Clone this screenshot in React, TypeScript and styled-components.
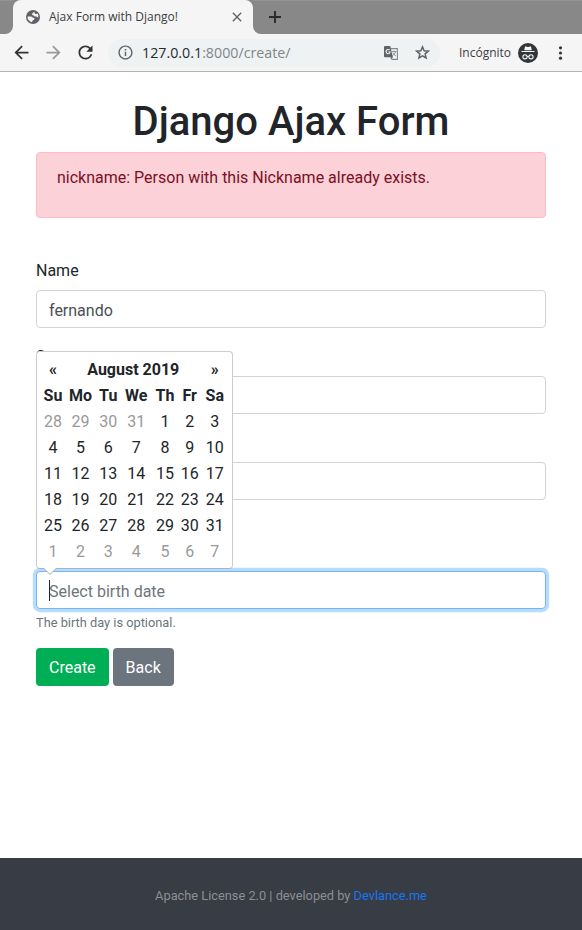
import React from 'react';
import styled, { createGlobalStyle, css } from 'styled-components';
import {
  MdArrowBack,
  MdArrowForward,
  MdClose,
  MdInfoOutline,
  MdRefresh,
} from 'react-icons/md';

const GlobalStyle = createGlobalStyle`
  *, *::before, *::after { box-sizing: border-box; }
  body {
    margin: 0;
    background: #fff;
    color: #212529;
    font: 400 16px/1.5 Roboto, "Liberation Sans", sans-serif;
  }
  svg { flex: none; }
`;

const Window = styled.div`
  display: flex;
  flex-direction: column;
  height: 930px;
  overflow: hidden;
`;

const TabStrip = styled.div`
  display: flex;
  height: 34px;
  background: #888;
  box-shadow: inset 0 1px #939393;
  font: 12px/34px "Open Sans", "Noto Sans", sans-serif;
`;

const TabBacking = styled.div<{ $grow?: boolean }>`
  display: flex;
  flex: ${(p) => (p.$grow ? '1' : 'none')};
  background: #f5f5f5;
`;

const StripEdge = styled.div<{ $side: 'left' | 'right' }>`
  display: flex;
  align-items: center;
  width: ${(p) => (p.$side === 'left' ? '13px' : '100%')};
  padding-left: ${(p) => (p.$side === 'left' ? '0' : '16px')};
  border-radius: ${(p) => (p.$side === 'left' ? '0 0 8px 0' : '0 0 0 8px')};
  background: #888;
  box-shadow: inset 0 1px #939393;
`;

const TabShoulder = styled.div`
  background: linear-gradient(#888 50%, #f5f5f5 50%);
`;

const Tab = styled.div`
  display: flex;
  align-items: center;
  width: 240px;
  padding: 0 8px 0 13px;
  border-radius: 8px 8px 0 0;
  background: #f5f5f5;
  color: #5f6368;
`;

const TabTitle = styled.span`
  flex: 1;
  margin-left: 9px;
  color: #3c4043;
  white-space: nowrap;
`;

const Toolbar = styled.div`
  display: flex;
  align-items: center;
  height: 38px;
  padding-left: 11px;
  background: #f5f5f5;
  border-bottom: 1px solid #b3b3b3;
  font-family: "Open Sans", "Noto Sans", sans-serif;
  color: #333;
`;

const Navigation = styled.div`
  display: flex;
  align-items: center;
  flex: none;
  gap: 11px;
  width: 97px;
  margin-top: -1px;
`;

const Forward = styled(MdArrowForward)`
  color: #999;
`;

const AddressBar = styled.div`
  display: flex;
  align-items: center;
  flex: none;
  width: 332px;
  height: 28px;
  padding: 0 10px 0 9px;
  border-radius: 14px;
  background: #eef2f3;
  color: #5f6368;
`;

const Url = styled.span`
  flex: 1;
  margin-left: 8px;
  font-size: 14.25px;
  line-height: 20px;
  color: #80868b;
`;

const Host = styled.span`
  color: #292a2d;
`;

const AddressActions = styled.span`
  display: flex;
  align-items: center;
  gap: 17px;
`;

const Profile = styled.div`
  display: flex;
  align-items: center;
  flex: none;
  justify-content: space-between;
  width: 79px;
  margin: 0 20px 0 19px;
  font-size: 12px;
  color: #3c4043;
`;

const Main = styled.main`
  flex: 1;
  padding: 24px 36px 0;
`;

const Title = styled.h1`
  margin: 0 0 6px;
  padding-top: 2px;
  font-size: 40px;
  font-weight: 500;
  line-height: 48px;
  text-align: center;
`;

const Alert = styled.div`
  margin-bottom: 40px;
  padding: 13px 20px 27px;
  border: 1px solid #fbbcc7;
  border-radius: 4px;
  background: #fcd1d8;
  color: #7c0f24;
`;

const Group = styled.div`
  margin-bottom: 16px;
`;

const Label = styled.label`
  display: block;
  height: 25px;
  margin-bottom: 7px;
  padding-top: 1px;
`;

const Field = styled.div`
  position: relative;
`;

const Input = styled.input<{ $active?: boolean }>`
  display: block;
  width: 100%;
  height: 38px;
  padding: 7px 12px 5px;
  border: 1px solid #ced4da;
  border-radius: 4px;
  outline: none;
  background: #fff;
  color: #495057;
  font: inherit;
  &::placeholder { color: #6c757d; opacity: 1; }
  ${(p) =>
    p.$active &&
    css`
      border-color: #75b5fb;
      box-shadow: 0 0 0 3.2px #b8dcfd;
    `}
`;

const Caret = styled.span`
  position: absolute;
  left: 13px;
  top: 9px;
  width: 1px;
  height: 21px;
  background: #212529;
`;

const Help = styled.small`
  display: block;
  min-height: 19.2px;
  margin-top: 4px;
  font-size: 12.8px;
  line-height: 19.2px;
  color: #6c757d;
`;

const Button = styled.button<{ $color: string }>`
  height: 38px;
  padding: 2px 13px 0;
  border: 0;
  border-radius: 4px;
  background: ${(p) => p.$color};
  color: #fff;
  font: inherit;
`;

const Actions = styled.div`
  display: flex;
  gap: 4px;
`;

const Picker = styled.div`
  position: absolute;
  z-index: 2;
  left: 0;
  bottom: 40px;
  width: 197px;
  height: 218px;
  padding: 5px 4px 3px;
  border: 1px solid #ccc;
  border-bottom-color: #a8b4c0;
  border-radius: 4px;
  background: #fff;
  &::before, &::after {
    content: "";
    position: absolute;
    left: 6px;
    top: 100%;
    border: 7px solid transparent;
    border-bottom: 0;
    border-top-color: #a7adb3;
  }
  &::after {
    left: 7px;
    border-width: 6px 6px 0;
    border-top-color: #fff;
  }
`;

const Calendar = styled.div`
  display: grid;
  grid-template-columns: 24px 31px 24.5px 31.5px 26px 23.5px 26.5px;
  grid-auto-rows: 26px;
  line-height: 26px;
  text-align: center;
`;

const HeadCell = styled.div<{ $span?: number }>`
  grid-column: span ${(p) => p.$span ?? 1};
  font-weight: 700;
`;

const Day = styled.div<{ $muted: boolean }>`
  color: ${(p) => (p.$muted ? '#999' : '#212529')};
`;

const Footer = styled.footer`
  height: 72px;
  padding-top: 28px;
  background: #383c44;
  color: #8c8f92;
  font-size: 12.8px;
  line-height: 19px;
  text-align: center;
`;

const Link = styled.a`
  color: #1676f3;
`;

const GlobeIcon = () => (
  <svg width="14" height="14" viewBox="0 0 14 14">
    <circle cx="7" cy="7" r="7" fill="#5f6368" />
    <path
      d="M8.3 1.7 6.2 3.4v1.5l1.6.5 1 1.2h1.5l1.9 1.1q.6-2.3-.6-4.1l-1.4.5-1.4-.4z"
      fill="#f5f5f5"
    />
    <path d="M1.6 6.4h3.6l1.9 1.3 1.2.3v1.5l-1.6 1-.8 1.8q-3.6-1.2-4.3-4.3z" fill="#f5f5f5" />
  </svg>
);

const PlusIcon = () => (
  <svg width="12" height="12" viewBox="0 0 12 12">
    <path d="M6 0v12M0 6h12" stroke="#292a2d" strokeWidth="1.9" />
  </svg>
);

const TranslateIcon = () => (
  <svg width="14" height="14" viewBox="0 0 14 14">
    <path d="M7 2.6h6.4v10.8H7.6" fill="#f5f5f5" stroke="#85898d" strokeWidth="1.1" />
    <path d="M8 5.5h4.5M10.2 4.5v1M11.7 5.6Q10.8 8.6 8.6 9.6M8.8 6.5q1 2.6 3.2 3.6" fill="none" stroke="#85898d" strokeWidth=".9" />
    <path d="M1 0h5.3l2.6 11.3H1q-1 0-1-1V1q0-1 1-1z" fill="#5f6368" />
    <path d="M5.7 4.2A2.1 2.1 0 1 0 6.2 6H4.3" fill="none" stroke="#eef2f3" strokeWidth="1.1" />
    <path d="M6.2 11.3h2.7L7.4 13.5z" fill="#5f6368" />
  </svg>
);

const StarIcon = () => (
  <svg width="15" height="15" viewBox="0 0 15 15">
    <path
      d="m7.5 1.9 1.65 3.85 4.15.38-3.15 2.75.94 4.1L7.5 10.8l-3.59 2.18.94-4.1L1.7 6.13l4.15-.38z"
      fill="none"
      stroke="#5f6368"
      strokeWidth="1.5"
    />
  </svg>
);

const IncognitoIcon = () => (
  <svg width="20" height="20" viewBox="0 0 20 20">
    <circle cx="10" cy="10" r="10" fill="#333639" />
    <path d="M6.2 7.2 7 3.8q.2-.6.8-.4l2.2.5 2.2-.5q.6-.2.8.4l.8 3.4zM3.5 8h13v1h-13z" fill="#f5f5f5" />
    <g fill="none" stroke="#f5f5f5" strokeWidth="1.1">
      <circle cx="7" cy="13.8" r="2.1" />
      <circle cx="13" cy="13.8" r="2.1" />
      <path d="M9.1 13.6q.9-.6 1.8 0" />
    </g>
  </svg>
);

const MenuIcon = () => (
  <svg width="5" height="14" viewBox="0 0 5 14" fill="#333639">
    <circle cx="2.5" cy="1.8" r="1.6" />
    <circle cx="2.5" cy="7" r="1.6" />
    <circle cx="2.5" cy="12.2" r="1.6" />
  </svg>
);

const weekdays = ['Su', 'Mo', 'Tu', 'We', 'Th', 'Fr', 'Sa'];
const firstDay = Date.UTC(2019, 6, 28);
const days = Array.from({ length: 42 }, (_, i) => new Date(firstDay + i * 86400000));

function DatePicker() {
  return (
    <Picker>
      <Calendar>
        <HeadCell>«</HeadCell>
        <HeadCell $span={5}>August 2019</HeadCell>
        <HeadCell>»</HeadCell>
        {weekdays.map((day) => (
          <HeadCell key={day}>{day}</HeadCell>
        ))}
        {days.map((day) => (
          <Day key={day.getTime()} $muted={day.getUTCMonth() !== 7}>
            {day.getUTCDate()}
          </Day>
        ))}
      </Calendar>
    </Picker>
  );
}

export default function App() {
  return (
    <Window>
      <GlobalStyle />
      <TabStrip>
        <TabBacking>
          <StripEdge $side="left" />
        </TabBacking>
        <TabShoulder>
          <Tab>
            <GlobeIcon />
            <TabTitle>Ajax Form with Django!</TabTitle>
            <MdClose size={16} />
          </Tab>
        </TabShoulder>
        <TabBacking $grow>
          <StripEdge $side="right">
            <PlusIcon />
          </StripEdge>
        </TabBacking>
      </TabStrip>
      <Toolbar>
        <Navigation>
          <MdArrowBack size={21} />
          <Forward size={21} />
          <MdRefresh size={21} />
        </Navigation>
        <AddressBar>
          <MdInfoOutline size={17} />
          <Url>
            <Host>127.0.0.1</Host>:8000/create/
          </Url>
          <AddressActions>
            <TranslateIcon />
            <StarIcon />
          </AddressActions>
        </AddressBar>
        <Profile>
          Incógnito
          <IncognitoIcon />
        </Profile>
        <MenuIcon />
      </Toolbar>
      <Main>
        <Title>Django Ajax Form</Title>
        <Alert>nickname: Person with this Nickname already exists.</Alert>
        <Group>
          <Label>Name</Label>
          <Input defaultValue="fernando" />
        </Group>
        <Group>
          <Label>Surname</Label>
          <Input />
        </Group>
        <Group>
          <Label />
          <Input />
          <Help />
        </Group>
        <Group>
          <Label />
          <Field>
            <Input $active placeholder="Select birth date" />
            <Caret />
            <DatePicker />
          </Field>
          <Help>The birth day is optional.</Help>
        </Group>
        <Actions>
          <Button $color="#00ae55">Create</Button>
          <Button $color="#6c757d">Back</Button>
        </Actions>
      </Main>
      <Footer>
        Apache License 2.0 | developed by <Link>Devlance.me</Link>
      </Footer>
    </Window>
  );
}
